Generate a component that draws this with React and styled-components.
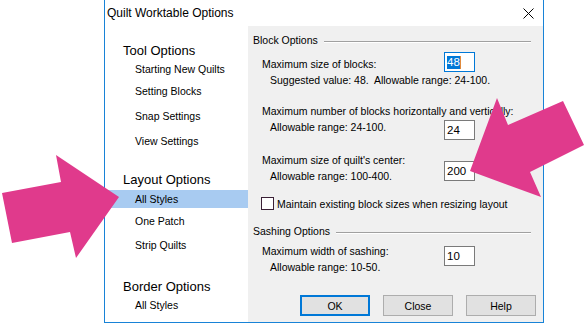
import React from "react";
import styled, { createGlobalStyle } from "styled-components";

const Global = createGlobalStyle`
  html, body { margin: 0; padding: 0; background: #fff; }
  body { font-family: "Liberation Sans", Arial, sans-serif; color: #000; }
`;

const Stage = styled.div`
  position: relative;
  width: 586px;
  height: 324px;
  overflow: hidden;
  background: #fff;
`;

const Dialog = styled.div`
  margin-left: 104px;
  width: 440px;
  height: 323px;
  box-sizing: border-box;
  border: 1px solid #1883d7;
  border-top: none;
  display: flex;
  flex-direction: column;
  background: #fff;
`;

const TitleBar = styled.div`
  height: 26px;
  flex: none;
  display: flex;
  align-items: center;
  justify-content: space-between;
  padding-left: 2px;
  padding-right: 9px;
  font-size: 12px;
`;

const Body = styled.div`
  flex: 1;
  display: flex;
`;

const Nav = styled.div`
  width: 143px;
  flex: none;
  background: #fff;
  display: flex;
  flex-direction: column;
  padding-top: 16px;
  box-sizing: border-box;
`;

const NavHeading = styled.div`
  height: 18px;
  line-height: 18px;
  font-size: 13px;
  padding-left: 18px;
  margin-top: ${(p) => p.$mt || 0}px;
  white-space: nowrap;
`;

const NavItem = styled.div`
  height: 18px;
  line-height: 18px;
  font-size: 10.5px;
  padding-left: 30px;
  margin-top: ${(p) => p.$mt || 0}px;
  background: ${(p) => (p.$selected ? "#a8cbf1" : "transparent")};
  white-space: nowrap;
`;

const Panel = styled.div`
  flex: 1;
  background: #f0f0f0;
  display: flex;
  flex-direction: column;
  padding: 6px 7px 0 5px;
  font-size: 10.5px;
`;

const SectionHeader = styled.div`
  display: flex;
  height: 16px;
  line-height: 16px;
  margin-top: ${(p) => p.$mt || 0}px;
  white-space: nowrap;
`;

const Rule = styled.div`
  flex: 1;
  height: 0;
  border-top: 1px solid #a0a0a0;
  border-bottom: 1px solid #fff;
  margin: 9px 5px 0 6px;
`;

const Field = styled.div`
  display: flex;
  align-items: flex-start;
  padding-left: 9px;
  margin-top: ${(p) => p.$mt || 0}px;
`;

const FieldLabel = styled.div`
  width: 182px;
  flex: none;
  padding-top: ${(p) => p.$pt || 0}px;
  white-space: nowrap;
  line-height: 16px;
`;

const SubLine = styled.div`
  padding-left: 8px;
`;

const InputBox = styled.div`
  width: 31px;
  height: 20px;
  box-sizing: border-box;
  flex: none;
  margin-top: ${(p) => p.$mt || 0}px;
  border: 1px solid ${(p) => (p.$focused ? "#0078d7" : "#7a7a7a")};
  background: #fff;
  font-size: 11.5px;
  line-height: 18px;
  padding-left: 2px;
  display: flex;
  align-items: center;
`;

const Selected = styled.span`
  background: #0078d7;
  color: #fff;
  line-height: 13px;
`;

const Caret = styled.span`
  width: 1px;
  height: 13px;
  background: #e08a3c;
`;

const CheckRow = styled.label`
  display: flex;
  align-items: center;
  gap: 3px;
  padding-left: 8px;
  height: 13px;
  margin-top: ${(p) => p.$mt || 0}px;
  white-space: nowrap;
`;

const CheckBox = styled.span`
  width: 13px;
  height: 13px;
  box-sizing: border-box;
  border: 1px solid #3a2036;
  background: #fff;
  flex: none;
`;

const ButtonRow = styled.div`
  display: flex;
  justify-content: flex-end;
  gap: 13px;
  margin-top: ${(p) => p.$mt || 0}px;
`;

const Button = styled.div`
  width: 70px;
  height: 21px;
  box-sizing: border-box;
  background: #e1e1e1;
  border: ${(p) => (p.$default ? "2px solid #0078d7" : "1px solid #adadad")};
  display: flex;
  align-items: center;
  justify-content: center;
  font-size: 10.5px;
`;

const Overlay = styled.svg`
  position: absolute;
  left: 0;
  top: 0;
  pointer-events: none;
`;

export default function App() {
  return (
    <Stage>
      <Global />
      <Dialog>
        <TitleBar>
          <span>Quilt Worktable Options</span>
          <svg width="11" height="11" viewBox="0 0 11 11">
            <path d="M0.5 0.5 L10.5 10.5 M10.5 0.5 L0.5 10.5" stroke="#000" strokeWidth="1" />
          </svg>
        </TitleBar>
        <Body>
          <Nav>
            <NavHeading>Tool Options</NavHeading>
            <NavItem>Starting New Quilts</NavItem>
            <NavItem $mt={4}>Setting Blocks</NavItem>
            <NavItem $mt={7}>Snap Settings</NavItem>
            <NavItem $mt={7}>View Settings</NavItem>
            <NavHeading $mt={21}>Layout Options</NavHeading>
            <NavItem $mt={1} $selected>All Styles</NavItem>
            <NavItem $mt={4}>One Patch</NavItem>
            <NavItem $mt={6}>Strip Quilts</NavItem>
            <NavHeading $mt={24}>Border Options</NavHeading>
            <NavItem>All Styles</NavItem>
          </Nav>
          <Panel>
            <SectionHeader>
              <span>Block Options</span>
              <Rule />
            </SectionHeader>
            <Field $mt={4}>
              <FieldLabel $pt={4}>
                <div>Maximum size of blocks:</div>
                <SubLine>Suggested value: 48.&nbsp; Allowable range: 24-100.</SubLine>
              </FieldLabel>
              <InputBox $focused>
                <Selected>48</Selected>
                <Caret />
              </InputBox>
            </Field>
            <Field $mt={15}>
              <FieldLabel>
                <div>Maximum number of blocks horizontally and vertically:</div>
                <SubLine>Allowable range: 24-100.</SubLine>
              </FieldLabel>
              <InputBox $mt={17}>24</InputBox>
            </Field>
            <Field $mt={12}>
              <FieldLabel>
                <div>Maximum size of quilt's center:</div>
                <SubLine>Allowable range: 100-400.</SubLine>
              </FieldLabel>
              <InputBox $mt={9}>200</InputBox>
            </Field>
            <CheckRow $mt={13}>
              <CheckBox />
              <span>Maintain existing block sizes when resizing layout</span>
            </CheckRow>
            <SectionHeader $mt={13}>
              <span>Sashing Options</span>
              <Rule />
            </SectionHeader>
            <Field $mt={4}>
              <FieldLabel>
                <div>Maximum width of sashing:</div>
                <SubLine>Allowable range: 10-50.</SubLine>
              </FieldLabel>
              <InputBox $mt={3}>10</InputBox>
            </Field>
            <ButtonRow $mt={20}>
              <Button $default>OK</Button>
              <Button>Close</Button>
              <Button>Help</Button>
            </ButtonRow>
          </Panel>
        </Body>
      </Dialog>
      <Overlay width="586" height="324" viewBox="0 0 586 324">
        <polygon
          points="2,193 61,182 56,155 119,197 76,258 70,232 12,243"
          fill="#e03a8c"
        />
        <polygon
          points="563,101 584,145 530,172 541,197 470,171 497,98 508,125"
          fill="#e03a8c"
        />
      </Overlay>
    </Stage>
  );
}
